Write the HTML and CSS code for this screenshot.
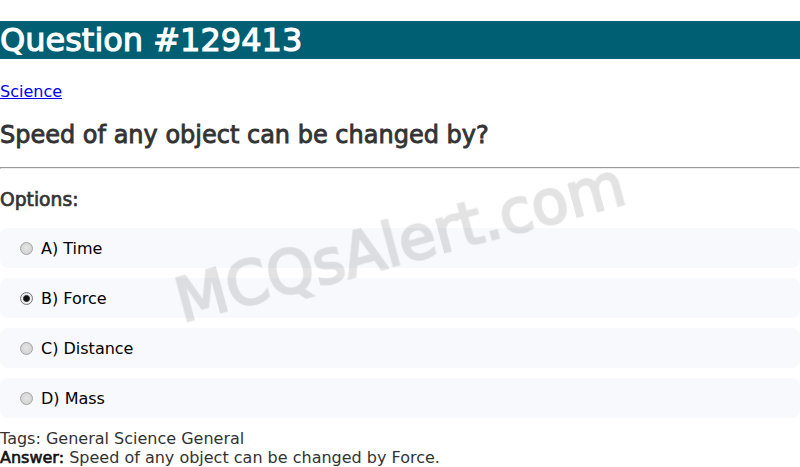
FILE: index.html
```html
<!DOCTYPE html>
<html>
<head>
<meta charset="utf-8">
<link rel="stylesheet" href="styles.css">
</head>
<body>
<h1 class="title">Question #129413</h1>
<p class="cat"><a href="#">Science</a></p>
<h2 class="question">Speed of any object can be changed by?</h2>
<hr class="sep">
<h3 class="opt-head">Options:</h3>
<div class="options">
  <label class="option"><input class="radio" type="radio" name="q"><span>A) Time</span></label>
  <label class="option"><input class="radio" type="radio" name="q" checked><span>B) Force</span></label>
  <label class="option"><input class="radio" type="radio" name="q"><span>C) Distance</span></label>
  <label class="option"><input class="radio" type="radio" name="q"><span>D) Mass</span></label>
</div>
<div class="meta">Tags: General Science General</div>
<div class="meta"><strong class="fb">Answer:</strong> Speed of any object can be changed by Force.</div>
<div class="watermark">MCQsAlert.com</div>
</body>
</html>
```
FILE: styles.css
```css
body {
  margin: 0;
  font-family: "DejaVu Sans", sans-serif;
  color: #333;
  background: #fff;
}
.title, .question, .opt-head, .fb, .watermark {
  font-weight: normal;
}
.title {
  font-size: 32px;
  margin: 21.44px 0;
  background: #005f73;
  color: #fff;
  -webkit-text-stroke: 1.1px #fff;
}
.cat {
  margin: 16px 0;
  padding-top: 1px;
  font-size: 16px;
}
.cat a {
  color: #0000ee;
}
.question {
  font-size: 24px;
  margin: 19.92px 0 18px;
  -webkit-text-stroke: 0.85px #333;
}
.sep {
  margin: 8px 0;
}
.opt-head {
  font-size: 18.72px;
  margin: 20.6px 0 17.72px;
  -webkit-text-stroke: 0.7px #333;
}
.options {
  display: flex;
  flex-direction: column;
  gap: 10px;
  margin-bottom: 11px;
}
.option {
  display: flex;
  align-items: center;
  gap: 5px;
  height: 40px;
  box-sizing: border-box;
  background: #f8f9fc;
  border-radius: 8px;
  padding: 0 15px;
  font-size: 16px;
  color: #000;
}
.radio {
  appearance: none;
  -webkit-appearance: none;
  width: 13px;
  height: 13px;
  margin: 0 3px 0 5px;
  border-radius: 50%;
  border: 1px solid #a4a4a4;
  background: radial-gradient(circle at 50% 45%, #e6e6e6 0, #d4d4d4 70%);
  box-sizing: border-box;
}
.radio:checked {
  border-color: #777;
  background: radial-gradient(circle, #111 0 2.6px, #555 3.2px, #eaeaea 3.8px);
}
.meta {
  font-size: 16px;
}
.fb {
  color: #111;
  -webkit-text-stroke: 0.6px #111;
}
.watermark {
  position: fixed;
  left: 50%;
  top: 50%;
  transform: translate(-50%, -38%) rotate(-15deg);
  font-size: 60px;
  color: #000;
  -webkit-text-stroke: 2.4px #000;
  opacity: 0.11;
  white-space: nowrap;
  pointer-events: none;
}
```
